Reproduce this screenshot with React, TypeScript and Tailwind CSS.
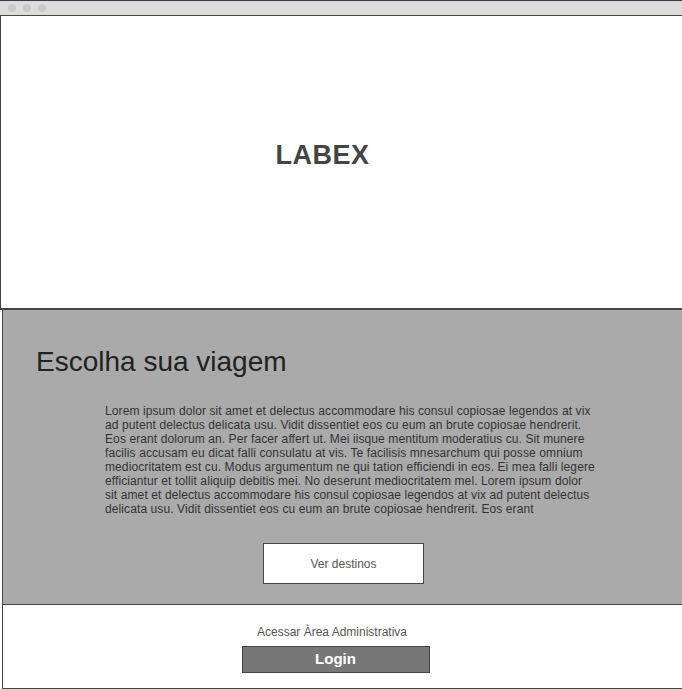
const App = () => {
  return (
    <div className="w-[682px] h-[689px] bg-white font-['Liberation_Sans',Arial,sans-serif] overflow-hidden">
      <BrowserBar />
      <Header />
      <Hero />
      <Footer />
    </div>
  );
};

const BrowserBar = () => {
  return (
    <div className="h-[15px] bg-[#dcdcdc] border-t border-[#3c3c48] flex items-center gap-[7px] pl-[8px]">
      <div className="w-[8px] h-[8px] rounded-full bg-[#c9c9c9]"></div>
      <div className="w-[8px] h-[8px] rounded-full bg-[#c9c9c9]"></div>
      <div className="w-[8px] h-[8px] rounded-full bg-[#c9c9c9]"></div>
    </div>
  );
};

const Header = () => {
  return (
    <div className="h-[295px] border-l border-t border-b-2 border-[#454545] flex items-center justify-center pr-[38px] pb-[14px]">
      <h1 className="text-[27px] font-bold text-[#444444] tracking-[0.5px]">LABEX</h1>
    </div>
  );
};

const Hero = () => {
  return (
    <div className="ml-[2px] h-[295px] bg-[#aaaaaa] border-l border-b border-[#454545] pt-[36px]">
      <h2 className="pl-[33px] text-[28px] text-[#222222] leading-[32px]">Escolha sua viagem</h2>
      <p className="ml-[102px] mt-[26px] w-[491px] text-[12px] leading-[14px] tracking-[0.1px] text-[#333333]">
        Lorem ipsum dolor sit amet et delectus accommodare his consul copiosae legendos at vix ad putent delectus delicata usu. Vidit dissentiet eos cu eum an brute copiosae hendrerit. Eos erant dolorum an. Per facer affert ut. Mei iisque mentitum moderatius cu. Sit munere facilis accusam eu dicat falli consulatu at vis. Te facilisis mnesarchum qui posse omnium mediocritatem est cu. Modus argumentum ne qui tation efficiendi in eos. Ei mea falli legere efficiantur et tollit aliquip debitis mei. No deserunt mediocritatem mel. Lorem ipsum dolor sit amet et delectus accommodare his consul copiosae legendos at vix ad putent delectus delicata usu. Vidit dissentiet eos cu eum an brute copiosae hendrerit. Eos erant
      </p>
      <div className="flex mt-[27px] pl-[260px]">
        <button className="w-[161px] h-[41px] bg-white border border-[#444444] text-[12px] text-[#555555]">
          Ver destinos
        </button>
      </div>
    </div>
  );
};

const Footer = () => {
  return (
    <div className="ml-[2px] h-[84px] border-l border-b border-[#454545] flex flex-col items-center pt-[20px] pr-[14px]">
      <p className="mr-[7px] text-[12px] text-[#555555] leading-[14px]">Acessar Àrea Administrativa</p>
      <button className="mt-[7px] w-[188px] h-[27px] bg-[#777777] border border-[#444444] text-white font-bold text-[15px]">
        Login
      </button>
    </div>
  );
};

export default App;
